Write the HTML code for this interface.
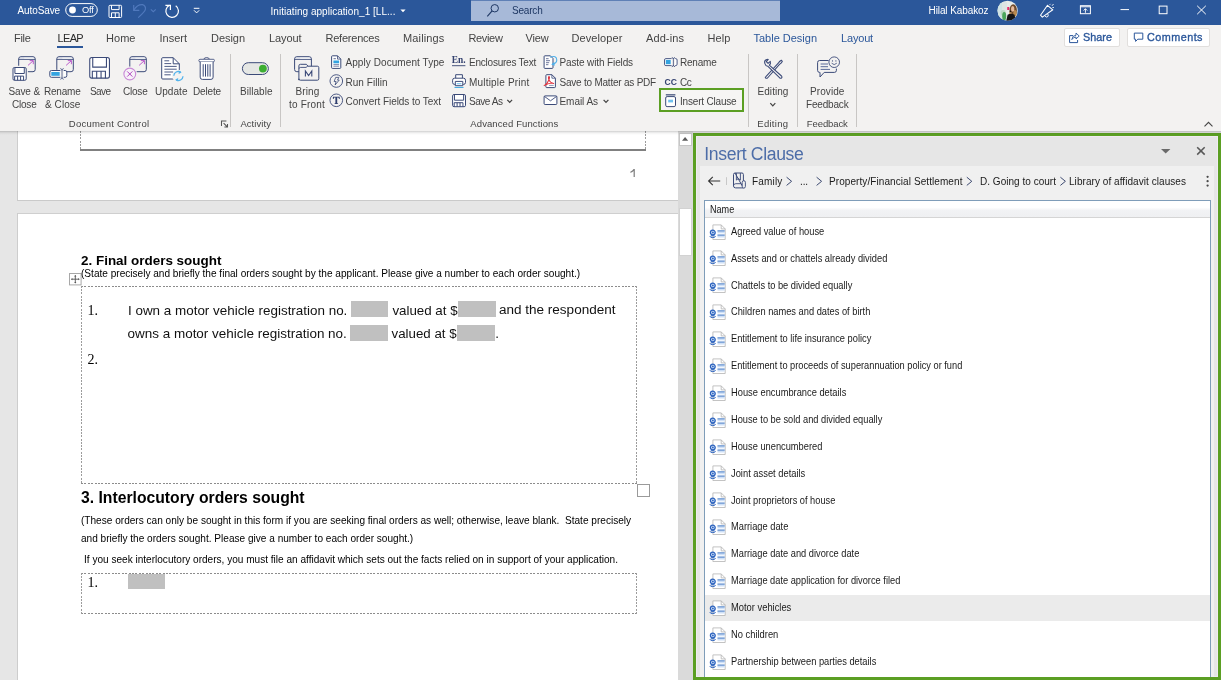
<!DOCTYPE html>
<html><head><meta charset="utf-8"><title>Word</title>
<style>

html,body{margin:0;padding:0;background:#e6e6e6;}
body{width:1221px;height:680px;overflow:hidden;font-family:"Liberation Sans",sans-serif;}
#root{position:relative;width:1221px;height:680px;overflow:hidden;background:#e6e6e6;}
.t{will-change:opacity;}
.a{position:absolute;}
.t{position:absolute;white-space:pre;color:#444;font-family:"Liberation Sans",sans-serif;}
svg{position:absolute;overflow:visible;}
.sep{position:absolute;width:1px;background:#c8c6c4;top:54px;height:73px;}
.fld{position:absolute;background:#c0c0c0;}
.row{position:absolute;left:705px;width:505px;height:27px;}

</style></head>
<body>
<div id="root">

<!-- ===== document area ===== -->
<div class="a" style="left:17.6px;top:131px;width:662px;height:69.2px;background:#fff;"></div>
<div class="a" style="left:17.6px;top:213.3px;width:662px;height:467px;background:#fff;"></div>
<div class="a" style="left:16.8px;top:131px;width:1px;height:70px;background:#cdcdcd;"></div>
<div class="a" style="left:16.8px;top:212.5px;width:663px;height:1px;background:#cfcfcf;"></div>
<div class="a" style="left:16.8px;top:212.5px;width:1px;height:468px;background:#cdcdcd;"></div>
<div class="a" style="left:16.8px;top:200px;width:663px;height:1px;background:#cacaca;"></div>
<!-- page1 remnants -->
<div class="a" style="left:80px;top:131px;width:1px;height:18.5px;background:repeating-linear-gradient(180deg,#9c9c9c 0,#9c9c9c 2px,transparent 2px,transparent 3.25px);"></div>
<div class="a" style="left:645px;top:131px;width:1px;height:18.5px;background:repeating-linear-gradient(180deg,#9c9c9c 0,#9c9c9c 2px,transparent 2px,transparent 3.25px);"></div>
<div class="a" style="left:80px;top:149.2px;width:566px;height:1.6px;background:#808080;"></div>
<svg style="left:0;top:0" width="700" height="200" viewBox="0 0 700 200"><path d="M633.6 168.9 H634.8 V176.9 H633.6 V170.9 Q632.2 172.2 630.3 172.8 V171.7 Q632.6 170.7 633.6 168.9 Z" fill="#7c7c7c"/></svg>
<!-- table 1 -->
<div class="a" style="left:80.5px;top:286px;width:556.5px;height:1px;background:repeating-linear-gradient(90deg,#8c8c8c 0,#8c8c8c 2px,transparent 2px,transparent 3.4px);"></div><div class="a" style="left:80.5px;top:483.3px;width:556.5px;height:1px;background:repeating-linear-gradient(90deg,#8c8c8c 0,#8c8c8c 2px,transparent 2px,transparent 3.4px);"></div><div class="a" style="left:80.5px;top:286px;width:1px;height:198.3px;background:repeating-linear-gradient(180deg,#9c9c9c 0,#9c9c9c 2px,transparent 2px,transparent 3.25px);"></div><div class="a" style="left:636.0px;top:286px;width:1px;height:198.3px;background:repeating-linear-gradient(180deg,#9c9c9c 0,#9c9c9c 2px,transparent 2px,transparent 3.25px);"></div>
<div class="a" style="left:637px;top:484.2px;width:12.6px;height:12.6px;border:1px solid #9a9a9a;background:#fff;box-sizing:border-box;"></div>
<svg style="left:69.2px;top:273.2px" width="13" height="13" viewBox="0 0 13 13"><rect x="0.5" y="0.5" width="11.6" height="11.4" fill="#fff" stroke="#a8a8a8" stroke-width="1"/><path d="M6.3 2.4 V10 M2.4 6.2 H10.2" stroke="#555" stroke-width="0.9"/><path d="M5.2 3.4 L6.3 2 L7.4 3.4 Z M5.2 9 L6.3 10.4 L7.4 9 Z M3.4 5.1 L2 6.2 L3.4 7.3 Z M9.2 5.1 L10.6 6.2 L9.2 7.3 Z" fill="#555"/></svg>
<div class="fld" style="left:351px;top:301.3px;width:37px;height:15.6px;"></div>
<div class="fld" style="left:458.2px;top:301.3px;width:37.5px;height:15.6px;"></div>
<div class="fld" style="left:350.4px;top:325px;width:37.6px;height:15.6px;"></div>
<div class="fld" style="left:457px;top:325px;width:38px;height:15.6px;"></div>
<!-- table 2 -->
<div class="a" style="left:80.5px;top:573.1px;width:556.5px;height:1px;background:repeating-linear-gradient(90deg,#8c8c8c 0,#8c8c8c 2px,transparent 2px,transparent 3.4px);"></div><div class="a" style="left:80.5px;top:612.7px;width:556.5px;height:1px;background:repeating-linear-gradient(90deg,#8c8c8c 0,#8c8c8c 2px,transparent 2px,transparent 3.4px);"></div><div class="a" style="left:80.5px;top:573.1px;width:1px;height:40.6px;background:repeating-linear-gradient(180deg,#9c9c9c 0,#9c9c9c 2px,transparent 2px,transparent 3.25px);"></div><div class="a" style="left:636.0px;top:573.1px;width:1px;height:40.6px;background:repeating-linear-gradient(180deg,#9c9c9c 0,#9c9c9c 2px,transparent 2px,transparent 3.25px);"></div>
<div class="fld" style="left:128px;top:574px;width:36.7px;height:15px;"></div>
<!-- scrollbar -->
<div class="a" style="left:678.4px;top:131px;width:15px;height:549px;background:#dadada;"></div>
<div class="a" style="left:679px;top:133px;width:12.5px;height:12.5px;background:#fff;border:1px solid #c6c6c6;box-sizing:border-box;"></div>
<svg style="left:682.1px;top:137.3px" width="6.2" height="3.7" viewBox="0 0 6.2 3.7"><path d="M0 3.7 L3.1 0 L6.2 3.7 Z" fill="#5a5a5a"/></svg>
<div class="a" style="left:679px;top:208px;width:12.5px;height:47.5px;background:#fff;border:1px solid #d2d2d2;box-sizing:border-box;"></div>

<!-- ===== Insert Clause pane ===== -->
<div class="a" style="left:693px;top:133px;width:528px;height:547px;background:#5b9f23;"></div>
<div class="a" style="left:696.1px;top:136px;width:522.1px;height:541.2px;background:#e6e6e6;border:0.8px solid #f0ebf2;box-sizing:border-box;"></div>
<div class="a" style="left:700px;top:165.8px;width:514.3px;height:510.8px;background:#f0f0f0;"></div>
<div class="a" style="left:704px;top:200px;width:507px;height:477.2px;background:#fff;border:1px solid #7f9db9;border-bottom:none;box-sizing:border-box;"></div>
<div class="a" style="left:705px;top:201px;width:505px;height:16px;background:linear-gradient(#ffffff 0,#ffffff 40%,#f1f2f4 60%,#eff0f2 100%);border-bottom:1px solid #d5d5d5;"></div>
<div class="a" style="left:705px;top:594.8px;width:505px;height:26px;background:#ebebeb;"></div>
<svg style="left:709.1px;top:223.5px" width="17" height="17" viewBox="0 0 17 17"><path d="M3.9 0.9 H12.2 L16.2 4.9 V15.5 H3.9 Z" fill="#fff" stroke="#b4b4b4" stroke-width="0.8"/><path d="M12.2 0.9 V4.9 H16.2" fill="none" stroke="#b4b4b4" stroke-width="0.8"/><rect x="8.5" y="6.4" width="7.2" height="2.9" fill="#cfe0f6"/><rect x="8.5" y="10.6" width="7.2" height="2.9" fill="#cfe0f6"/><path d="M8.5 6.9 H15.7 M8.5 11.1 H15.7" stroke="#4d7fc6" stroke-width="1"/><circle cx="3.8" cy="8.6" r="2.4" fill="#d4e3f8" stroke="#2c63bf" stroke-width="1.3"/><circle cx="3.9" cy="8.5" r="0.9" fill="#2c63bf"/><ellipse cx="3.7" cy="12.6" rx="2.6" ry="0.9" fill="none" stroke="#2c63bf" stroke-width="1"/></svg>
<svg style="left:709.1px;top:250.38px" width="17" height="17" viewBox="0 0 17 17"><path d="M3.9 0.9 H12.2 L16.2 4.9 V15.5 H3.9 Z" fill="#fff" stroke="#b4b4b4" stroke-width="0.8"/><path d="M12.2 0.9 V4.9 H16.2" fill="none" stroke="#b4b4b4" stroke-width="0.8"/><rect x="8.5" y="6.4" width="7.2" height="2.9" fill="#cfe0f6"/><rect x="8.5" y="10.6" width="7.2" height="2.9" fill="#cfe0f6"/><path d="M8.5 6.9 H15.7 M8.5 11.1 H15.7" stroke="#4d7fc6" stroke-width="1"/><circle cx="3.8" cy="8.6" r="2.4" fill="#d4e3f8" stroke="#2c63bf" stroke-width="1.3"/><circle cx="3.9" cy="8.5" r="0.9" fill="#2c63bf"/><ellipse cx="3.7" cy="12.6" rx="2.6" ry="0.9" fill="none" stroke="#2c63bf" stroke-width="1"/></svg>
<svg style="left:709.1px;top:277.25px" width="17" height="17" viewBox="0 0 17 17"><path d="M3.9 0.9 H12.2 L16.2 4.9 V15.5 H3.9 Z" fill="#fff" stroke="#b4b4b4" stroke-width="0.8"/><path d="M12.2 0.9 V4.9 H16.2" fill="none" stroke="#b4b4b4" stroke-width="0.8"/><rect x="8.5" y="6.4" width="7.2" height="2.9" fill="#cfe0f6"/><rect x="8.5" y="10.6" width="7.2" height="2.9" fill="#cfe0f6"/><path d="M8.5 6.9 H15.7 M8.5 11.1 H15.7" stroke="#4d7fc6" stroke-width="1"/><circle cx="3.8" cy="8.6" r="2.4" fill="#d4e3f8" stroke="#2c63bf" stroke-width="1.3"/><circle cx="3.9" cy="8.5" r="0.9" fill="#2c63bf"/><ellipse cx="3.7" cy="12.6" rx="2.6" ry="0.9" fill="none" stroke="#2c63bf" stroke-width="1"/></svg>
<svg style="left:709.1px;top:304.12px" width="17" height="17" viewBox="0 0 17 17"><path d="M3.9 0.9 H12.2 L16.2 4.9 V15.5 H3.9 Z" fill="#fff" stroke="#b4b4b4" stroke-width="0.8"/><path d="M12.2 0.9 V4.9 H16.2" fill="none" stroke="#b4b4b4" stroke-width="0.8"/><rect x="8.5" y="6.4" width="7.2" height="2.9" fill="#cfe0f6"/><rect x="8.5" y="10.6" width="7.2" height="2.9" fill="#cfe0f6"/><path d="M8.5 6.9 H15.7 M8.5 11.1 H15.7" stroke="#4d7fc6" stroke-width="1"/><circle cx="3.8" cy="8.6" r="2.4" fill="#d4e3f8" stroke="#2c63bf" stroke-width="1.3"/><circle cx="3.9" cy="8.5" r="0.9" fill="#2c63bf"/><ellipse cx="3.7" cy="12.6" rx="2.6" ry="0.9" fill="none" stroke="#2c63bf" stroke-width="1"/></svg>
<svg style="left:709.1px;top:331.0px" width="17" height="17" viewBox="0 0 17 17"><path d="M3.9 0.9 H12.2 L16.2 4.9 V15.5 H3.9 Z" fill="#fff" stroke="#b4b4b4" stroke-width="0.8"/><path d="M12.2 0.9 V4.9 H16.2" fill="none" stroke="#b4b4b4" stroke-width="0.8"/><rect x="8.5" y="6.4" width="7.2" height="2.9" fill="#cfe0f6"/><rect x="8.5" y="10.6" width="7.2" height="2.9" fill="#cfe0f6"/><path d="M8.5 6.9 H15.7 M8.5 11.1 H15.7" stroke="#4d7fc6" stroke-width="1"/><circle cx="3.8" cy="8.6" r="2.4" fill="#d4e3f8" stroke="#2c63bf" stroke-width="1.3"/><circle cx="3.9" cy="8.5" r="0.9" fill="#2c63bf"/><ellipse cx="3.7" cy="12.6" rx="2.6" ry="0.9" fill="none" stroke="#2c63bf" stroke-width="1"/></svg>
<svg style="left:709.1px;top:357.88px" width="17" height="17" viewBox="0 0 17 17"><path d="M3.9 0.9 H12.2 L16.2 4.9 V15.5 H3.9 Z" fill="#fff" stroke="#b4b4b4" stroke-width="0.8"/><path d="M12.2 0.9 V4.9 H16.2" fill="none" stroke="#b4b4b4" stroke-width="0.8"/><rect x="8.5" y="6.4" width="7.2" height="2.9" fill="#cfe0f6"/><rect x="8.5" y="10.6" width="7.2" height="2.9" fill="#cfe0f6"/><path d="M8.5 6.9 H15.7 M8.5 11.1 H15.7" stroke="#4d7fc6" stroke-width="1"/><circle cx="3.8" cy="8.6" r="2.4" fill="#d4e3f8" stroke="#2c63bf" stroke-width="1.3"/><circle cx="3.9" cy="8.5" r="0.9" fill="#2c63bf"/><ellipse cx="3.7" cy="12.6" rx="2.6" ry="0.9" fill="none" stroke="#2c63bf" stroke-width="1"/></svg>
<svg style="left:709.1px;top:384.75px" width="17" height="17" viewBox="0 0 17 17"><path d="M3.9 0.9 H12.2 L16.2 4.9 V15.5 H3.9 Z" fill="#fff" stroke="#b4b4b4" stroke-width="0.8"/><path d="M12.2 0.9 V4.9 H16.2" fill="none" stroke="#b4b4b4" stroke-width="0.8"/><rect x="8.5" y="6.4" width="7.2" height="2.9" fill="#cfe0f6"/><rect x="8.5" y="10.6" width="7.2" height="2.9" fill="#cfe0f6"/><path d="M8.5 6.9 H15.7 M8.5 11.1 H15.7" stroke="#4d7fc6" stroke-width="1"/><circle cx="3.8" cy="8.6" r="2.4" fill="#d4e3f8" stroke="#2c63bf" stroke-width="1.3"/><circle cx="3.9" cy="8.5" r="0.9" fill="#2c63bf"/><ellipse cx="3.7" cy="12.6" rx="2.6" ry="0.9" fill="none" stroke="#2c63bf" stroke-width="1"/></svg>
<svg style="left:709.1px;top:411.62px" width="17" height="17" viewBox="0 0 17 17"><path d="M3.9 0.9 H12.2 L16.2 4.9 V15.5 H3.9 Z" fill="#fff" stroke="#b4b4b4" stroke-width="0.8"/><path d="M12.2 0.9 V4.9 H16.2" fill="none" stroke="#b4b4b4" stroke-width="0.8"/><rect x="8.5" y="6.4" width="7.2" height="2.9" fill="#cfe0f6"/><rect x="8.5" y="10.6" width="7.2" height="2.9" fill="#cfe0f6"/><path d="M8.5 6.9 H15.7 M8.5 11.1 H15.7" stroke="#4d7fc6" stroke-width="1"/><circle cx="3.8" cy="8.6" r="2.4" fill="#d4e3f8" stroke="#2c63bf" stroke-width="1.3"/><circle cx="3.9" cy="8.5" r="0.9" fill="#2c63bf"/><ellipse cx="3.7" cy="12.6" rx="2.6" ry="0.9" fill="none" stroke="#2c63bf" stroke-width="1"/></svg>
<svg style="left:709.1px;top:438.5px" width="17" height="17" viewBox="0 0 17 17"><path d="M3.9 0.9 H12.2 L16.2 4.9 V15.5 H3.9 Z" fill="#fff" stroke="#b4b4b4" stroke-width="0.8"/><path d="M12.2 0.9 V4.9 H16.2" fill="none" stroke="#b4b4b4" stroke-width="0.8"/><rect x="8.5" y="6.4" width="7.2" height="2.9" fill="#cfe0f6"/><rect x="8.5" y="10.6" width="7.2" height="2.9" fill="#cfe0f6"/><path d="M8.5 6.9 H15.7 M8.5 11.1 H15.7" stroke="#4d7fc6" stroke-width="1"/><circle cx="3.8" cy="8.6" r="2.4" fill="#d4e3f8" stroke="#2c63bf" stroke-width="1.3"/><circle cx="3.9" cy="8.5" r="0.9" fill="#2c63bf"/><ellipse cx="3.7" cy="12.6" rx="2.6" ry="0.9" fill="none" stroke="#2c63bf" stroke-width="1"/></svg>
<svg style="left:709.1px;top:465.38px" width="17" height="17" viewBox="0 0 17 17"><path d="M3.9 0.9 H12.2 L16.2 4.9 V15.5 H3.9 Z" fill="#fff" stroke="#b4b4b4" stroke-width="0.8"/><path d="M12.2 0.9 V4.9 H16.2" fill="none" stroke="#b4b4b4" stroke-width="0.8"/><rect x="8.5" y="6.4" width="7.2" height="2.9" fill="#cfe0f6"/><rect x="8.5" y="10.6" width="7.2" height="2.9" fill="#cfe0f6"/><path d="M8.5 6.9 H15.7 M8.5 11.1 H15.7" stroke="#4d7fc6" stroke-width="1"/><circle cx="3.8" cy="8.6" r="2.4" fill="#d4e3f8" stroke="#2c63bf" stroke-width="1.3"/><circle cx="3.9" cy="8.5" r="0.9" fill="#2c63bf"/><ellipse cx="3.7" cy="12.6" rx="2.6" ry="0.9" fill="none" stroke="#2c63bf" stroke-width="1"/></svg>
<svg style="left:709.1px;top:492.25px" width="17" height="17" viewBox="0 0 17 17"><path d="M3.9 0.9 H12.2 L16.2 4.9 V15.5 H3.9 Z" fill="#fff" stroke="#b4b4b4" stroke-width="0.8"/><path d="M12.2 0.9 V4.9 H16.2" fill="none" stroke="#b4b4b4" stroke-width="0.8"/><rect x="8.5" y="6.4" width="7.2" height="2.9" fill="#cfe0f6"/><rect x="8.5" y="10.6" width="7.2" height="2.9" fill="#cfe0f6"/><path d="M8.5 6.9 H15.7 M8.5 11.1 H15.7" stroke="#4d7fc6" stroke-width="1"/><circle cx="3.8" cy="8.6" r="2.4" fill="#d4e3f8" stroke="#2c63bf" stroke-width="1.3"/><circle cx="3.9" cy="8.5" r="0.9" fill="#2c63bf"/><ellipse cx="3.7" cy="12.6" rx="2.6" ry="0.9" fill="none" stroke="#2c63bf" stroke-width="1"/></svg>
<svg style="left:709.1px;top:519.12px" width="17" height="17" viewBox="0 0 17 17"><path d="M3.9 0.9 H12.2 L16.2 4.9 V15.5 H3.9 Z" fill="#fff" stroke="#b4b4b4" stroke-width="0.8"/><path d="M12.2 0.9 V4.9 H16.2" fill="none" stroke="#b4b4b4" stroke-width="0.8"/><rect x="8.5" y="6.4" width="7.2" height="2.9" fill="#cfe0f6"/><rect x="8.5" y="10.6" width="7.2" height="2.9" fill="#cfe0f6"/><path d="M8.5 6.9 H15.7 M8.5 11.1 H15.7" stroke="#4d7fc6" stroke-width="1"/><circle cx="3.8" cy="8.6" r="2.4" fill="#d4e3f8" stroke="#2c63bf" stroke-width="1.3"/><circle cx="3.9" cy="8.5" r="0.9" fill="#2c63bf"/><ellipse cx="3.7" cy="12.6" rx="2.6" ry="0.9" fill="none" stroke="#2c63bf" stroke-width="1"/></svg>
<svg style="left:709.1px;top:546.0px" width="17" height="17" viewBox="0 0 17 17"><path d="M3.9 0.9 H12.2 L16.2 4.9 V15.5 H3.9 Z" fill="#fff" stroke="#b4b4b4" stroke-width="0.8"/><path d="M12.2 0.9 V4.9 H16.2" fill="none" stroke="#b4b4b4" stroke-width="0.8"/><rect x="8.5" y="6.4" width="7.2" height="2.9" fill="#cfe0f6"/><rect x="8.5" y="10.6" width="7.2" height="2.9" fill="#cfe0f6"/><path d="M8.5 6.9 H15.7 M8.5 11.1 H15.7" stroke="#4d7fc6" stroke-width="1"/><circle cx="3.8" cy="8.6" r="2.4" fill="#d4e3f8" stroke="#2c63bf" stroke-width="1.3"/><circle cx="3.9" cy="8.5" r="0.9" fill="#2c63bf"/><ellipse cx="3.7" cy="12.6" rx="2.6" ry="0.9" fill="none" stroke="#2c63bf" stroke-width="1"/></svg>
<svg style="left:709.1px;top:572.88px" width="17" height="17" viewBox="0 0 17 17"><path d="M3.9 0.9 H12.2 L16.2 4.9 V15.5 H3.9 Z" fill="#fff" stroke="#b4b4b4" stroke-width="0.8"/><path d="M12.2 0.9 V4.9 H16.2" fill="none" stroke="#b4b4b4" stroke-width="0.8"/><rect x="8.5" y="6.4" width="7.2" height="2.9" fill="#cfe0f6"/><rect x="8.5" y="10.6" width="7.2" height="2.9" fill="#cfe0f6"/><path d="M8.5 6.9 H15.7 M8.5 11.1 H15.7" stroke="#4d7fc6" stroke-width="1"/><circle cx="3.8" cy="8.6" r="2.4" fill="#d4e3f8" stroke="#2c63bf" stroke-width="1.3"/><circle cx="3.9" cy="8.5" r="0.9" fill="#2c63bf"/><ellipse cx="3.7" cy="12.6" rx="2.6" ry="0.9" fill="none" stroke="#2c63bf" stroke-width="1"/></svg>
<svg style="left:709.1px;top:599.75px" width="17" height="17" viewBox="0 0 17 17"><path d="M3.9 0.9 H12.2 L16.2 4.9 V15.5 H3.9 Z" fill="#fff" stroke="#b4b4b4" stroke-width="0.8"/><path d="M12.2 0.9 V4.9 H16.2" fill="none" stroke="#b4b4b4" stroke-width="0.8"/><rect x="8.5" y="6.4" width="7.2" height="2.9" fill="#cfe0f6"/><rect x="8.5" y="10.6" width="7.2" height="2.9" fill="#cfe0f6"/><path d="M8.5 6.9 H15.7 M8.5 11.1 H15.7" stroke="#4d7fc6" stroke-width="1"/><circle cx="3.8" cy="8.6" r="2.4" fill="#d4e3f8" stroke="#2c63bf" stroke-width="1.3"/><circle cx="3.9" cy="8.5" r="0.9" fill="#2c63bf"/><ellipse cx="3.7" cy="12.6" rx="2.6" ry="0.9" fill="none" stroke="#2c63bf" stroke-width="1"/></svg>
<svg style="left:709.1px;top:626.62px" width="17" height="17" viewBox="0 0 17 17"><path d="M3.9 0.9 H12.2 L16.2 4.9 V15.5 H3.9 Z" fill="#fff" stroke="#b4b4b4" stroke-width="0.8"/><path d="M12.2 0.9 V4.9 H16.2" fill="none" stroke="#b4b4b4" stroke-width="0.8"/><rect x="8.5" y="6.4" width="7.2" height="2.9" fill="#cfe0f6"/><rect x="8.5" y="10.6" width="7.2" height="2.9" fill="#cfe0f6"/><path d="M8.5 6.9 H15.7 M8.5 11.1 H15.7" stroke="#4d7fc6" stroke-width="1"/><circle cx="3.8" cy="8.6" r="2.4" fill="#d4e3f8" stroke="#2c63bf" stroke-width="1.3"/><circle cx="3.9" cy="8.5" r="0.9" fill="#2c63bf"/><ellipse cx="3.7" cy="12.6" rx="2.6" ry="0.9" fill="none" stroke="#2c63bf" stroke-width="1"/></svg>
<svg style="left:709.1px;top:653.5px" width="17" height="17" viewBox="0 0 17 17"><path d="M3.9 0.9 H12.2 L16.2 4.9 V15.5 H3.9 Z" fill="#fff" stroke="#b4b4b4" stroke-width="0.8"/><path d="M12.2 0.9 V4.9 H16.2" fill="none" stroke="#b4b4b4" stroke-width="0.8"/><rect x="8.5" y="6.4" width="7.2" height="2.9" fill="#cfe0f6"/><rect x="8.5" y="10.6" width="7.2" height="2.9" fill="#cfe0f6"/><path d="M8.5 6.9 H15.7 M8.5 11.1 H15.7" stroke="#4d7fc6" stroke-width="1"/><circle cx="3.8" cy="8.6" r="2.4" fill="#d4e3f8" stroke="#2c63bf" stroke-width="1.3"/><circle cx="3.9" cy="8.5" r="0.9" fill="#2c63bf"/><ellipse cx="3.7" cy="12.6" rx="2.6" ry="0.9" fill="none" stroke="#2c63bf" stroke-width="1"/></svg>
<svg style="left:0;top:0" width="1221" height="200" viewBox="0 0 1221 200"><path d="M1161 149 H1170.4 L1165.7 153.4 Z" fill="#6a6a6a"/>
<path d="M1197.2 147.3 L1204.7 154.6 M1204.7 147.3 L1197.2 154.6" stroke="#585858" stroke-width="1.55"/>
<path d="M708.6 181 H720.2 M712.8 176.8 L708.6 181 L712.8 185.2" fill="none" stroke="#333" stroke-width="1.1"/>
<path d="M726.5 177.2 V185" stroke="#c8c8c8" stroke-width="1"/>
<g transform="translate(733,172.5)"><path d="M2 0.5 H9 Q10.4 0.5 10.4 2 V8.4 M10.4 15.4 H2.6 Q0.5 15.4 0.5 13.4 V2 Q0.5 0.5 2 0.5 Z" fill="none" stroke="#3b4a78" stroke-width="1"/><path d="M0.6 13 Q0.8 11.2 2.8 11.2 H8.2" fill="none" stroke="#3b4a78" stroke-width="0.9"/><path d="M3.4 0.6 V7.6 L5.4 6 L7.4 7.6 V0.6" fill="none" stroke="#3b4a78" stroke-width="0.9"/><rect x="9.2" y="8.2" width="3.2" height="7.4" rx="1.6" fill="#f0f0f0" stroke="#3b4a78" stroke-width="0.9"/></g>
<path d="M786.6 177.2 L791.6 181.29999999999998 L786.6 185.39999999999998" fill="none" stroke="#3d4a70" stroke-width="1.0"/>
<path d="M816.6 177.2 L821.6 181.29999999999998 L816.6 185.39999999999998" fill="none" stroke="#3d4a70" stroke-width="1.0"/>
<path d="M966.8 177.2 L971.8 181.29999999999998 L966.8 185.39999999999998" fill="none" stroke="#3d4a70" stroke-width="1.0"/>
<path d="M1060.4 177.2 L1065.4 181.29999999999998 L1060.4 185.39999999999998" fill="none" stroke="#3d4a70" stroke-width="1.0"/>
<circle cx="1207.6" cy="176.8" r="1.15" fill="#4a4a4a"/>
<circle cx="1207.6" cy="181.2" r="1.15" fill="#4a4a4a"/>
<circle cx="1207.6" cy="185.6" r="1.15" fill="#4a4a4a"/></svg>

<!-- ===== title bar ===== -->
<div class="a" style="left:0;top:0;width:1221px;height:25px;background:#2b579a;"></div>
<div class="a" style="left:470.6px;top:0;width:309.2px;height:20.5px;background:#a7b9d8;border-top:1px solid #5f80b6;box-sizing:border-box;"></div>
<svg style="left:0;top:0" width="1221" height="25" viewBox="0 0 1221 25"><rect x="65.7" y="3.6" width="31.6" height="12.8" rx="6.4" fill="none" stroke="#fff" stroke-width="1"/>
<circle cx="72.5" cy="10" r="3.4" fill="#fff"/>
<g transform="translate(108.5,4.8)"><rect x="0.5" y="0.5" width="12.6" height="12.2" rx="1" fill="none" stroke="#fff"/><path d="M3 0.5 V4.8 H10.6 V0.5 M3 12.7 V8 H10.6 V12.7 M6.8 8 V12.7" fill="none" stroke="#fff"/></g>
<path d="M133.7 5 V10.3 H139.3" fill="none" stroke="#5079bd" stroke-width="1.15"/>
<path d="M133.9 10.1 Q137 4.4 142.4 4.6 Q146 5.6 145.4 9.4 Q145 11.6 138.2 17.6" fill="none" stroke="#5079bd" stroke-width="1.15"/>
<path d="M150.8 9.3 L153.3 11.700000000000001 L155.8 9.3" fill="none" stroke="#5079bd" stroke-width="1.1"/>
<path d="M175.7 5.85 A6.3 6.3 0 1 1 169.6 5.3" fill="none" stroke="#fff" stroke-width="1.2"/>
<path d="M165.4 5.3 H170.4 V9.9" fill="none" stroke="#fff" stroke-width="1.2"/>
<path d="M193.8 8.3 H199.4" stroke="#fff" stroke-width="1"/>
<path d="M194 10.3 L196.6 12.9 L199.2 10.3" fill="none" stroke="#fff" stroke-width="1"/>
<path d="M400.4 9.4 H405.6 L403 12.2 Z" fill="#fff"/>
<circle cx="494.75" cy="8.25" r="3.7" fill="none" stroke="#1f3864" stroke-width="1"/>
<path d="M492.1 10.9 L487.3 16.4" stroke="#1f3864" stroke-width="1.1"/>
<defs><clipPath id="av"><circle cx="1007.6" cy="10.75" r="10.1"/></clipPath></defs>
<g clip-path="url(#av)"><rect x="997" y="0" width="22" height="22" fill="#e8ecea"/><rect x="997" y="0" width="5" height="22" fill="#cfe3e4"/><rect x="1002" y="2" width="5" height="9" fill="#dfe6e4"/><ellipse cx="1003.2" cy="13" rx="2.6" ry="3" fill="#b9d9c2"/><ellipse cx="1004.2" cy="16.2" rx="2" ry="4.2" fill="#4aa65b"/><rect x="1007.2" y="6.9" width="2.1" height="3.1" rx="0.5" fill="#e72f6d"/><ellipse cx="1013.2" cy="10.4" rx="3.7" ry="6.1" fill="#6e4a2c"/><ellipse cx="1015" cy="13.2" rx="1.7" ry="3.2" fill="#b98a4e"/><ellipse cx="1010.4" cy="13.6" rx="1.2" ry="2.6" fill="#c3975c"/><ellipse cx="1012.7" cy="8.9" rx="1.7" ry="2.8" fill="#e6b99b"/><path d="M1006 22 L1007.6 14.8 Q1011 12.6 1014.6 14.8 L1016 22 Z" fill="#141414"/><circle cx="1010.4" cy="11.4" r="0.8" fill="#1a1410"/></g>
<path d="M1040.5 15.2 L1047.5 5.3 L1052.8 9.8 L1042.3 17.1 Z" fill="none" stroke="#fff" stroke-width="1.05" stroke-linejoin="round"/>
<path d="M1044.8 15.8 Q1046 18 1047.9 16.5 Q1048.7 15.2 1047.7 13.9" fill="none" stroke="#fff" stroke-width="0.95"/>
<path d="M1049.7 4.8 L1050.5 3.9 M1052 5.8 L1053.5 4 M1052.4 7.5 H1053.9" stroke="#fff" stroke-width="0.9"/>
<g transform="translate(1079.9,5.2)"><rect x="0.5" y="0.5" width="10" height="8" fill="none" stroke="#fff"/><path d="M0.5 1.5 H10.5" stroke="#fff" stroke-width="1.3" opacity="0.75"/><path d="M5.5 7.6 V3.6 M3.7 5.3 L5.5 3.5 L7.3 5.3" fill="none" stroke="#fff" stroke-width="0.95"/></g>
<path d="M1120.5 9.6 H1129" stroke="#fff" stroke-width="1"/>
<rect x="1159.2" y="6.1" width="7.8" height="7.6" fill="none" stroke="#fff" stroke-width="1"/>
<path d="M1197.2 5.8 L1205.8 14.2 M1205.8 5.8 L1197.2 14.2" stroke="#fff" stroke-width="1"/></svg>

<!-- ===== ribbon ===== -->
<div class="a" style="left:0;top:25px;width:1221px;height:105.6px;background:#f3f2f1;"></div>
<div class="a" style="left:0;top:130.6px;width:1221px;height:4.4px;background:linear-gradient(rgba(0,0,0,0.20) 0,rgba(0,0,0,0.10) 25%,rgba(0,0,0,0.04) 60%,rgba(0,0,0,0) 100%);"></div>
<div class="a" style="left:57px;top:45.5px;width:26px;height:2px;background:#2b579a;"></div>
<div class="sep" style="left:230.2px"></div>
<div class="sep" style="left:280px"></div>
<div class="sep" style="left:748.1px"></div>
<div class="sep" style="left:796.7px"></div>
<div class="sep" style="left:856.1px"></div>
<!-- share / comments -->
<div class="a" style="left:1063.7px;top:27.8px;width:56px;height:19.2px;background:#fff;border:1px solid #e1dfdd;box-sizing:border-box;border-radius:2px;"></div>
<div class="a" style="left:1127.4px;top:27.8px;width:83px;height:19.2px;background:#fff;border:1px solid #e1dfdd;box-sizing:border-box;border-radius:2px;"></div>
<!-- insert clause highlight -->
<div class="a" style="left:659px;top:88px;width:85px;height:24px;border:2.6px solid #5b9f23;box-sizing:border-box;background:#f6f5f4;"></div>
<svg style="left:0;top:0" width="1221" height="135" viewBox="0 0 1221 135"><g transform="translate(18.2,56.2)"><path d="M0.5 3.2 V2.7 Q0.5 0.5 2.7 0.5 H14.8 Q17.0 0.5 17.0 2.7 V3.2 Z" fill="#fff"/><rect x="0.5" y="0.5" width="16.5" height="15" rx="2.2" fill="none" stroke="#3b4a78" stroke-width="1"/><path d="M0.5 3.2 H17.0" stroke="#3b4a78" stroke-width="0.9"/><path d="M2 1.8 H6" stroke="#b9c0d6" stroke-width="0.7"/><path d="M9.8 9.2 L15.0 4.5" stroke="#b655c7" stroke-width="0.95" fill="none"/><path d="M11.5 4.3999999999999995 H15.100000000000001 V8.0" stroke="#b655c7" stroke-width="0.95" fill="none"/></g>
<g transform="translate(12.5,67)"><rect x="-1.2" y="-1.2" width="16.6" height="16.2" rx="2" fill="#f3f2f1"/><rect x="0.5" y="0.5" width="13.2" height="12.8" rx="1.42" fill="#fff" stroke="#3b4a78" stroke-width="1.0"/><path d="M2.41 0.5 V6.49 H11.79 V0.5" fill="none" stroke="#3b4a78" stroke-width="1.0"/><path d="M2.13 13.3 V9.11 H11.08 V13.3" fill="none" stroke="#3b4a78" stroke-width="1.0"/><path d="M5.11 9.11 V13.3 M8.09 9.11 V13.3" stroke="#3b4a78" stroke-width="1.0"/></g>
<g transform="translate(56.3,56.2)"><path d="M0.5 3.2 V2.7 Q0.5 0.5 2.7 0.5 H14.8 Q17.0 0.5 17.0 2.7 V3.2 Z" fill="#fff"/><rect x="0.5" y="0.5" width="16.5" height="15" rx="2.2" fill="none" stroke="#3b4a78" stroke-width="1"/><path d="M0.5 3.2 H17.0" stroke="#3b4a78" stroke-width="0.9"/><path d="M2 1.8 H6" stroke="#b9c0d6" stroke-width="0.7"/><path d="M9.8 9.2 L15.0 4.5" stroke="#b655c7" stroke-width="0.95" fill="none"/><path d="M11.5 4.3999999999999995 H15.100000000000001 V8.0" stroke="#b655c7" stroke-width="0.95" fill="none"/></g>
<g transform="translate(49.3,70)"><rect x="0.5" y="0.5" width="17" height="6.8" rx="1.6" fill="#fff" stroke="#3b4a78"/><rect x="2" y="2" width="8.4" height="3.8" fill="#33a3e0"/><rect x="11" y="-0.5" width="3.4" height="9" fill="#f3f2f1"/><path d="M11 -1.5 Q12.7 -1.2 12.7 0.5 V7.3 Q12.7 9 11 9.3 M14.4 -1.5 Q12.7 -1.2 12.7 0.5 M12.7 7.3 Q12.7 9 14.4 9.3" fill="none" stroke="#3b4a78" stroke-width="0.8"/></g>
<g transform="translate(89.2,56.9)"><rect x="0.55" y="0.55" width="19.7" height="20.7" rx="2.08" fill="#fff" stroke="#3b4a78" stroke-width="1.1"/><path d="M3.54 0.55 V10.25 H17.26 V0.55" fill="none" stroke="#3b4a78" stroke-width="1.1"/><path d="M3.12 21.25 V14.39 H16.22 V21.25" fill="none" stroke="#3b4a78" stroke-width="1.1"/><path d="M7.49 14.39 V21.25 M11.86 14.39 V21.25" stroke="#3b4a78" stroke-width="1.1"/></g>
<g transform="translate(129.3,56.2)"><path d="M0.5 3.2 V2.7 Q0.5 0.5 2.7 0.5 H14.8 Q17.0 0.5 17.0 2.7 V3.2 Z" fill="#fff"/><rect x="0.5" y="0.5" width="16.5" height="15" rx="2.2" fill="none" stroke="#3b4a78" stroke-width="1"/><path d="M0.5 3.2 H17.0" stroke="#3b4a78" stroke-width="0.9"/><path d="M2 1.8 H6" stroke="#b9c0d6" stroke-width="0.7"/><path d="M9.8 9.2 L15.0 4.5" stroke="#b655c7" stroke-width="0.95" fill="none"/><path d="M11.5 4.3999999999999995 H15.100000000000001 V8.0" stroke="#b655c7" stroke-width="0.95" fill="none"/></g>
<g transform="translate(129.8,74)"><circle r="7.4" fill="#f3f2f1"/><circle r="5.9" fill="#f7f2f8" stroke="#c88ad6" stroke-width="1.1"/><path d="M-2.6 -2.6 L2.6 2.6 M2.6 -2.6 L-2.6 2.6" stroke="#b146c2" stroke-width="1"/></g>
<g transform="translate(161.2,57.2)"><path d="M1.5 0.5 H12 L18.1 6.6 V21.8 H1.5 Q0.5 21.8 0.5 20.8 V1.5 Q0.5 0.5 1.5 0.5 Z" fill="#fff" stroke="#3b4a78"/><path d="M12 0.5 V6.6 H18.1" fill="none" stroke="#3b4a78"/><path d="M3.2 3.6 H8 M3.2 6.4 H10 M3.2 9.2 H15.5 M3.2 12 H15.5 M3.2 14.8 H12 M3.2 17.6 H9.5" stroke="#3b4a78" stroke-width="0.9"/><circle cx="17.2" cy="18.8" r="6.3" fill="#f3f2f1"/><path d="M12.6 18.6 A4.6 4.6 0 0 1 19.6 14.9 M21.8 19 A4.6 4.6 0 0 1 14.8 22.7" fill="none" stroke="#55b4ec" stroke-width="1.3"/><path d="M17.6 13.2 L20.4 15.2 L17.4 16.8 Z M16.8 24.4 L14 22.4 L17 20.8 Z" fill="#55b4ec"/></g>
<g transform="translate(198.4,57.2)"><path d="M5.4 2.1 Q5.6 0.4 8.2 0.4 Q10.8 0.4 11 2.1" fill="none" stroke="#3b4a78" stroke-width="0.9"/><rect x="0.5" y="2.1" width="15.5" height="2.5" rx="1.1" fill="#fff" stroke="#3b4a78" stroke-width="0.85"/><path d="M1.8 4.6 V20 Q1.8 22.2 4 22.2 H12.5 Q14.7 22.2 14.7 20 V4.6" fill="#fff" stroke="#3b4a78"/><path d="M4.8 7 V19.4 M7.1 7 V19.4 M9.4 7 V19.4 M11.7 7 V19.4" stroke="#3b4a78" stroke-width="1"/></g>
<g transform="translate(241.9,62.2)"><rect x="0.5" y="0.5" width="26" height="11.8" rx="5.9" fill="#e5e7e4" stroke="#3b4a78"/><circle cx="21" cy="6.4" r="3.9" fill="#3cae32"/></g>
<g transform="translate(294.1,56.2)"><path d="M0.5 3.2 V2.7 Q0.5 0.5 2.7 0.5 H15.100000000000001 Q17.3 0.5 17.3 2.7 V3.2 Z" fill="#fff"/><rect x="0.5" y="0.5" width="16.8" height="15" rx="2.2" fill="none" stroke="#3b4a78" stroke-width="1"/><path d="M0.5 3.2 H17.3" stroke="#3b4a78" stroke-width="0.9"/><path d="M2 1.8 H6" stroke="#b9c0d6" stroke-width="0.7"/></g>
<g transform="translate(298.4,63.8)"><path d="M0.5 16.3 V2 Q0.5 0.5 2 0.5 H8 L9.6 2.4 H19 Q20.4 2.4 20.4 3.8 V15 Q20.4 16.4 19 16.4 H2 Q0.5 16.4 0.5 15 Z" fill="#f3f2f1" stroke="#3b4a78"/><path d="M0.8 4.8 Q0.8 3.6 2.2 3.6 H7.6 L9.4 2.4" fill="none" stroke="#3b4a78" stroke-width="0.9"/><path d="M7 12.8 V7.2 L10.2 11.8 L13.4 7.2 V12.8" fill="none" stroke="#3b4a78" stroke-width="1.1" stroke-linejoin="miter"/></g>
<g transform="translate(331.1,55.3)"><path d="M1.3 0.5 H6.4 L9.7 3.8 V12.2 Q9.7 13.1 8.8 13.1 H1.3 Q0.5 13.1 0.5 12.2 V1.3 Q0.5 0.5 1.3 0.5 Z" fill="#fff" stroke="#3b4a78"/><path d="M6.4 0.5 V3.8 H9.7" fill="none" stroke="#3b4a78" stroke-width="0.8"/><path d="M2.4 3.4 H4.8" stroke="#3b4a78" stroke-width="0.8"/><rect x="2.3" y="5.2" width="5.7" height="2.8" fill="#33a3e0"/><path d="M2.3 9.3 H8 M2.3 10.9 H8" stroke="#6f7aa0" stroke-width="0.9"/></g>
<g transform="translate(336.3,81)"><circle r="6.3" fill="none" stroke="#3b4a78" stroke-width="0.9"/><path d="M-0.6 -3.6 H2.6 L1.2 -0.9 H2.9 L-1.2 4 L-0.2 0.5 H-2.2 Z" fill="none" stroke="#3b4a78" stroke-width="0.8" stroke-linejoin="round"/></g>
<g transform="translate(336.3,100.3)"><circle r="6.3" fill="none" stroke="#3b4a78" stroke-width="0.9"/><path d="M-3.4 -3.6 H3.4 V-1.4 H2.7 Q2.5 -2.7 1.5 -2.7 H0.9 V2.6 Q0.9 3 1.8 3.1 V3.7 H-1.8 V3.1 Q-0.9 3 -0.9 2.6 V-2.7 H-1.5 Q-2.5 -2.7 -2.7 -1.4 H-3.4 Z" fill="#2f3e6e"/></g>
<path d="M452 65.7 H465.4" stroke="#33416f" stroke-width="0.9"/>
<g transform="translate(452.1,74.2)"><path d="M3.6 4 V0.5 H10.3 V4" fill="#fff" stroke="#3b4a78"/><rect x="0.5" y="4" width="12.9" height="6.2" rx="2" fill="#fff" stroke="#3b4a78"/><path d="M3.2 7.2 H10.7 V11.5 H3.2 Z" fill="#fff" stroke="#3b4a78"/><path d="M4.6 9.5 H9.3" stroke="#7fc4ee" stroke-width="1.2"/><path d="M2.4 13.2 H11.4" stroke="#33a3e0" stroke-width="1"/></g>
<g transform="translate(452.1,94)"><rect x="0.5" y="0.5" width="12.9" height="12.2" rx="1.39" fill="#fff" stroke="#3b4a78" stroke-width="1.0"/><path d="M2.36 0.5 V6.20 H11.54 V0.5" fill="none" stroke="#3b4a78" stroke-width="1.0"/><path d="M2.08 12.7 V8.71 H10.84 V12.7" fill="none" stroke="#3b4a78" stroke-width="1.0"/><path d="M5.00 8.71 V12.7 M7.92 8.71 V12.7" stroke="#3b4a78" stroke-width="1.0"/></g>
<path d="M507.3 99.8 L509.7 102.39999999999999 L512.1 99.8" fill="none" stroke="#444" stroke-width="1.25"/>
<g transform="translate(543.6,55.3)"><path d="M1.3 0.5 H6.8 L9.4 3.2 V12.2 Q9.4 13.1 8.5 13.1 H1.3 Q0.5 13.1 0.5 12.2 V1.3 Q0.5 0.5 1.3 0.5 Z" fill="#fff" stroke="#3b4a78"/><path d="M2.4 3.4 H5 M2.4 5.4 H6.4 M2.4 7.4 H5.6 M2.4 9.4 H4.8" stroke="#5b668f" stroke-width="0.9"/><path d="M6.4 2 Q13 -0.6 13.2 4.6 Q13.2 7.6 9 8.8" fill="none" stroke="#4fb0ea" stroke-width="1.1"/><path d="M10.6 6.8 L7.6 9.2 L11.2 10.4 Z" fill="#4fb0ea"/></g>
<g transform="translate(544.1,74.2)"><path d="M2.6 0.5 H7.8 L11.3 4 V12.7 Q11.3 13.4 10.5 13.4 H2.6 Q1.8 13.4 1.8 12.7 V1.3 Q1.8 0.5 2.6 0.5 Z" fill="#fff" stroke="#3b4a78"/><path d="M7.8 0.5 V4 H11.3" fill="none" stroke="#3b4a78" stroke-width="0.8"/><path d="M5 11.2 H9.6" stroke="#6f7aa0" stroke-width="0.8"/><path d="M0 11.4 Q3.4 9.6 4.9 5.6 Q5.9 2.6 4.9 2.4 Q3.9 2.6 4.7 5.4 Q5.9 8.6 9.6 9.2 Q7 8 0 11.4 Z" fill="none" stroke="#e0353f" stroke-width="1.05" stroke-linejoin="round"/></g>
<g transform="translate(543.6,95.4)"><rect x="0.5" y="0.5" width="12.8" height="8.6" rx="1" fill="#fff" stroke="#3b4a78"/><path d="M0.8 1 L6.9 5.4 L13 1" fill="none" stroke="#3b4a78" stroke-width="0.9"/></g>
<path d="M603.6 99.8 L606.0 102.39999999999999 L608.4 99.8" fill="none" stroke="#444" stroke-width="1.25"/>
<g transform="translate(664,57.2)"><rect x="0.5" y="1.4" width="12.6" height="7" rx="1.4" fill="#fff" stroke="#3b4a78" stroke-width="0.9"/><rect x="1.8" y="2.7" width="4.9" height="4.3" fill="#33a3e0"/><rect x="7.6" y="0" width="3.4" height="10" fill="#f3f2f1"/><path d="M7.8 0.3 Q9.4 0.5 9.4 2 V7.8 Q9.4 9.3 7.8 9.5 M11 0.3 Q9.4 0.5 9.4 2 M9.4 7.8 Q9.4 9.3 11 9.5" fill="none" stroke="#3b4a78" stroke-width="0.8"/></g>
<g transform="translate(665.2,94)"><path d="M0.6 0.8 H10.2" stroke="#5e6a8f" stroke-width="1.5"/><rect x="0.5" y="2.6" width="9.8" height="10" rx="1.4" fill="#fff" stroke="#3b4a78"/><rect x="3" y="5.7" width="4.8" height="2.7" fill="#6fc0ef"/></g>
<g transform="translate(763.7,59)"><path d="M2.2 17.6 L14.6 4.2 Q15.6 2.2 17.6 1.2 L18.6 2.4 Q17.6 4.2 15.8 5.4 L3.8 19 Q2.6 19.6 1.8 18.8 Q1.2 18.2 2.2 17.6 Z" fill="#f3f2f1" stroke="#3b4a78" stroke-width="1.05" stroke-linejoin="round"/><path d="M1.2 4.6 Q0.2 2 2.4 0.8 Q3.6 0.2 4.6 0.4 L2.6 2.6 L4.4 4.4 L6.6 2.4 Q7.4 4.6 5.6 6.2 L17.8 17 Q18.8 18.2 17.8 19 Q16.8 19.8 15.8 18.6 L4 7.2 Q2 7.2 1.2 4.6 Z" fill="#f3f2f1" stroke="#3b4a78" stroke-width="1.05" stroke-linejoin="round"/></g>
<path d="M770.3 103.1 L772.8 105.8 L775.3 103.1" fill="none" stroke="#444" stroke-width="1.25"/>
<g transform="translate(817,59)"><path d="M11.6 1.5 H2.6 Q0.6 1.5 0.6 3.5 V11.4 Q0.6 13.4 2.6 13.4 H3 V18 L7.2 13.4 H17.4 Q19.4 13.4 19.4 11.4 V9.6" fill="none" stroke="#3b4a78" stroke-width="1"/><path d="M3.6 5 H11 M3.6 7.7 H11 M3.6 10.4 H13" stroke="#5b6b99" stroke-width="1"/><circle cx="17.2" cy="3.2" r="5.3" fill="#f3f2f1" stroke="#3b4a78" stroke-width="0.9"/><path d="M14.6 4.2 Q17.2 7 19.8 4.2" fill="none" stroke="#3b4a78" stroke-width="0.8"/><circle cx="15.5" cy="1.9" r="0.6" fill="#3b4a78"/><circle cx="18.9" cy="1.9" r="0.6" fill="#3b4a78"/></g>
<g transform="translate(221,120.5)"><path d="M0.5 5.4 V0.5 H5.4" fill="none" stroke="#555" stroke-width="1.05"/><path d="M2.6 2.6 L6.3 6.3 M3.4 6.5 H6.5 V3.4" fill="none" stroke="#555" stroke-width="1.05"/></g>
<path d="M1204.5 126.3 L1208.5 122.3 L1212.5 126.3" fill="none" stroke="#444" stroke-width="1.1"/>
<g transform="translate(1069,32)"><path d="M4 3.6 H0.6 V10.6 H8.6 V8" fill="none" stroke="#2b579a" stroke-width="1"/><path d="M2.8 7.6 Q3.2 3.4 7 3.2 V1 L10.2 4 L7 7 V5 Q4.4 5 2.8 7.6 Z" fill="none" stroke="#2b579a" stroke-width="0.9" stroke-linejoin="round"/></g>
<g transform="translate(1133.8,32.6)"><path d="M0.5 0.5 H9 V6.6 H4 L1.8 8.8 V6.6 H0.5 Z" fill="none" stroke="#2b579a" stroke-width="1" stroke-linejoin="round"/></g></svg>

<span class="t" style='left:17.5px;top:3.5px;font-size:10px;line-height:13px;letter-spacing:-0.109px;color:#ffffff;'>AutoSave</span>
<span class="t" style='left:82.0px;top:4.3px;font-size:9.3px;line-height:12px;letter-spacing:-0.245px;color:#ffffff;'>Off</span>
<span class="t" style='left:270.5px;top:4.7px;font-size:10px;line-height:13px;letter-spacing:0.033px;color:#ffffff;'>Initiating application_1 [LL...</span>
<span class="t" style='left:512.0px;top:3.5px;font-size:10px;line-height:13px;letter-spacing:-0.198px;color:#1f3864;'>Search</span>
<span class="t" style='left:928.5px;top:4.0px;font-size:10px;line-height:13px;letter-spacing:-0.089px;color:#ffffff;'>Hilal Kabakoz</span>
<span class="t" style='left:14.0px;top:30.6px;font-size:11px;line-height:14px;letter-spacing:-0.309px;color:#444444;'>File</span>
<span class="t" style='left:57.5px;top:30.6px;font-size:11px;line-height:14px;letter-spacing:-0.660px;color:#2b2b2b;'>LEAP</span>
<span class="t" style='left:106.0px;top:30.6px;font-size:11px;line-height:14px;letter-spacing:0.039px;color:#444444;'>Home</span>
<span class="t" style='left:159.5px;top:30.6px;font-size:11px;line-height:14px;color:#444444;'>Insert</span>
<span class="t" style='left:211.0px;top:30.6px;font-size:11px;line-height:14px;letter-spacing:-0.042px;color:#444444;'>Design</span>
<span class="t" style='left:269.0px;top:30.6px;font-size:11px;line-height:14px;letter-spacing:-0.089px;color:#444444;'>Layout</span>
<span class="t" style='left:325.5px;top:30.6px;font-size:11px;line-height:14px;letter-spacing:-0.227px;color:#444444;'>References</span>
<span class="t" style='left:403.0px;top:30.6px;font-size:11px;line-height:14px;letter-spacing:0.143px;color:#444444;'>Mailings</span>
<span class="t" style='left:468.5px;top:30.6px;font-size:11px;line-height:14px;letter-spacing:-0.346px;color:#444444;'>Review</span>
<span class="t" style='left:525.5px;top:30.6px;font-size:11px;line-height:14px;letter-spacing:-0.164px;color:#444444;'>View</span>
<span class="t" style='left:571.5px;top:30.6px;font-size:11px;line-height:14px;letter-spacing:0.095px;color:#444444;'>Developer</span>
<span class="t" style='left:646.0px;top:30.6px;font-size:11px;line-height:14px;letter-spacing:0.100px;color:#444444;'>Add-ins</span>
<span class="t" style='left:707.5px;top:30.6px;font-size:11px;line-height:14px;letter-spacing:0.094px;color:#444444;'>Help</span>
<span class="t" style='left:753.5px;top:30.6px;font-size:11px;line-height:14px;letter-spacing:-0.008px;color:#2b579a;'>Table Design</span>
<span class="t" style='left:841.0px;top:30.6px;font-size:11px;line-height:14px;letter-spacing:-0.172px;color:#2b579a;'>Layout</span>
<span class="t" style='left:1083.0px;top:30.4px;font-size:10.8px;line-height:14px;letter-spacing:0.037px;color:#2b579a;-webkit-text-stroke:0.35px #2b579a;'>Share</span>
<span class="t" style='left:1147.0px;top:30.4px;font-size:10.8px;line-height:14px;letter-spacing:0.475px;color:#2b579a;-webkit-text-stroke:0.35px #2b579a;'>Comments</span>
<span class="t" style='left:8.5px;top:84.5px;font-size:10px;line-height:13px;letter-spacing:-0.125px;'>Save &amp;</span>
<span class="t" style='left:12.0px;top:98.0px;font-size:10px;line-height:13px;letter-spacing:-0.216px;'>Close</span>
<span class="t" style='left:44.0px;top:84.5px;font-size:10px;line-height:13px;letter-spacing:-0.219px;'>Rename</span>
<span class="t" style='left:45.0px;top:98.0px;font-size:10px;line-height:13px;letter-spacing:0.069px;'>&amp; Close</span>
<span class="t" style='left:90.0px;top:84.5px;font-size:10px;line-height:13px;letter-spacing:-0.574px;'>Save</span>
<span class="t" style='left:123.0px;top:84.5px;font-size:10px;line-height:13px;letter-spacing:-0.216px;'>Close</span>
<span class="t" style='left:155.0px;top:84.5px;font-size:10px;line-height:13px;letter-spacing:0.042px;'>Update</span>
<span class="t" style='left:193.0px;top:84.5px;font-size:10px;line-height:13px;letter-spacing:-0.151px;'>Delete</span>
<span class="t" style='left:240.0px;top:84.5px;font-size:10px;line-height:13px;letter-spacing:0.031px;'>Billable</span>
<span class="t" style='left:295.5px;top:84.5px;font-size:10px;line-height:13px;letter-spacing:0.128px;'>Bring</span>
<span class="t" style='left:289.0px;top:98.0px;font-size:10px;line-height:13px;letter-spacing:0.191px;'>to Front</span>
<span class="t" style='left:757.5px;top:84.5px;font-size:10px;line-height:13px;letter-spacing:0.060px;'>Editing</span>
<span class="t" style='left:810.0px;top:84.5px;font-size:10px;line-height:13px;letter-spacing:0.085px;'>Provide</span>
<span class="t" style='left:806.0px;top:98.0px;font-size:10px;line-height:13px;letter-spacing:-0.178px;'>Feedback</span>
<span class="t" style='left:68.8px;top:118.2px;font-size:9.5px;line-height:12px;letter-spacing:0.246px;'>Document Control</span>
<span class="t" style='left:240.4px;top:118.2px;font-size:9.5px;line-height:12px;letter-spacing:0.063px;'>Activity</span>
<span class="t" style='left:470.3px;top:118.2px;font-size:9.5px;line-height:12px;letter-spacing:0.106px;'>Advanced Functions</span>
<span class="t" style='left:757.3px;top:118.2px;font-size:9.5px;line-height:12px;letter-spacing:0.277px;'>Editing</span>
<span class="t" style='left:806.8px;top:118.2px;font-size:9.5px;line-height:12px;letter-spacing:-0.092px;'>Feedback</span>
<span class="t" style='left:345.5px;top:56.0px;font-size:10px;line-height:13px;letter-spacing:0.071px;'>Apply Document Type</span>
<span class="t" style='left:345.5px;top:75.5px;font-size:10px;line-height:13px;letter-spacing:0.031px;'>Run Fillin</span>
<span class="t" style='left:345.5px;top:94.5px;font-size:10px;line-height:13px;letter-spacing:-0.047px;'>Convert Fields to Text</span>
<span class="t" style='left:451.8px;top:54.3px;font-size:9.4px;line-height:12px;font-weight:700;font-family:"Liberation Serif", serif;color:#33416f;'>En.</span>
<span class="t" style='left:469.0px;top:56.0px;font-size:10px;line-height:13px;letter-spacing:-0.227px;'>Enclosures Text</span>
<span class="t" style='left:469.0px;top:75.5px;font-size:10px;line-height:13px;letter-spacing:0.192px;'>Multiple Print</span>
<span class="t" style='left:469.0px;top:94.5px;font-size:10px;line-height:13px;letter-spacing:-0.458px;'>Save As</span>
<span class="t" style='left:559.5px;top:56.0px;font-size:10px;line-height:13px;letter-spacing:-0.123px;'>Paste with Fields</span>
<span class="t" style='left:559.5px;top:75.5px;font-size:10px;line-height:13px;letter-spacing:-0.222px;'>Save to Matter as PDF</span>
<span class="t" style='left:559.5px;top:94.5px;font-size:10px;line-height:13px;letter-spacing:-0.051px;'>Email As</span>
<span class="t" style='left:680.0px;top:56.0px;font-size:10px;line-height:13px;letter-spacing:-0.219px;'>Rename</span>
<span class="t" style='left:664.6px;top:76.5px;font-size:8.6px;line-height:11px;letter-spacing:-0.111px;font-weight:700;color:#33416f;'>CC</span>
<span class="t" style='left:680.0px;top:75.5px;font-size:10px;line-height:13px;letter-spacing:-0.367px;'>Cc</span>
<span class="t" style='left:680.0px;top:94.5px;font-size:10px;line-height:13px;letter-spacing:-0.186px;'>Insert Clause</span>
<span class="t" style='left:704.3px;top:143.0px;font-size:17.6px;line-height:22px;letter-spacing:-0.343px;color:#4d6da8;'>Insert Clause</span>
<span class="t" style='left:752.0px;top:175.0px;font-size:10px;line-height:13px;letter-spacing:0.174px;color:#1a1a1a;'>Family</span>
<span class="t" style='left:800.0px;top:175.0px;font-size:10px;line-height:13px;letter-spacing:-0.115px;color:#1a1a1a;'>...</span>
<span class="t" style='left:829.0px;top:175.0px;font-size:10px;line-height:13px;letter-spacing:0.080px;color:#1a1a1a;'>Property/Financial Settlement</span>
<span class="t" style='left:980.0px;top:175.0px;font-size:10px;line-height:13px;letter-spacing:0.024px;color:#1a1a1a;'>D. Going to court</span>
<span class="t" style='left:1069.0px;top:175.0px;font-size:10px;line-height:13px;letter-spacing:0.056px;color:#1a1a1a;'>Library of affidavit clauses</span>
<span class="t" style='left:709.6px;top:202.9px;font-size:10.1px;line-height:13px;color:#1a1a1a;transform:scaleX(0.8984);transform-origin:0 50%;'>Name</span>
<span class="t" style='left:81.0px;top:252.0px;font-size:13.45px;line-height:17px;font-weight:700;color:#000;'>2. Final orders sought</span>
<span class="t" style='left:81.0px;top:267.0px;font-size:10.09px;line-height:13px;color:#000;'>(State precisely and briefly the final orders sought by the applicant. Please give a number to each order sought.)</span>
<span class="t" style='left:87.6px;top:301.5px;font-size:14px;line-height:18px;font-family:"Liberation Serif", serif;color:#000;'>1.</span>
<span class="t" style='left:128.0px;top:301.5px;font-size:13.43px;line-height:17px;color:#111;'>I own a motor vehicle registration no.</span>
<span class="t" style='left:392.4px;top:301.5px;font-size:13.33px;line-height:17px;color:#111;'>valued at $</span>
<span class="t" style='left:499.0px;top:301.0px;font-size:13.52px;line-height:18px;color:#111;'>and the respondent</span>
<span class="t" style='left:127.5px;top:324.5px;font-size:13.48px;line-height:18px;color:#111;'>owns a motor vehicle registration no.</span>
<span class="t" style='left:391.6px;top:325.0px;font-size:13.29px;line-height:17px;color:#111;'>valued at $</span>
<span class="t" style='left:495.2px;top:325.0px;font-size:13.3px;line-height:17px;color:#111;'>.</span>
<span class="t" style='left:87.6px;top:350.5px;font-size:14px;line-height:18px;font-family:"Liberation Serif", serif;color:#000;'>2.</span>
<span class="t" style='left:81.0px;top:487.5px;font-size:15.72px;line-height:20px;font-weight:700;color:#000;'>3. Interlocutory orders sought</span>
<span class="t" style='left:81.0px;top:514.0px;font-size:10.08px;line-height:13px;color:#000;'>(These orders can only be sought in this form if you are seeking final orders as well; otherwise, leave blank.  State precisely</span>
<span class="t" style='left:81.0px;top:531.5px;font-size:10.09px;line-height:13px;color:#000;'>and briefly the orders sought. Please give a number to each order sought.)</span>
<span class="t" style='left:84.0px;top:552.5px;font-size:10.07px;line-height:13px;color:#000;'>If you seek interlocutory orders, you must file an affidavit which sets out the facts relied on in support of your application.</span>
<span class="t" style='left:87.6px;top:573.5px;font-size:14px;line-height:18px;font-family:"Liberation Serif", serif;color:#000;'>1.</span>
<span class="t" style='left:731.2px;top:224.8px;font-size:10.1px;line-height:13px;color:#1a1a1a;transform:scaleX(0.9236);transform-origin:0 50%;'>Agreed value of house</span>
<span class="t" style='left:731.2px;top:251.7px;font-size:10.1px;line-height:13px;color:#1a1a1a;transform:scaleX(0.9193);transform-origin:0 50%;'>Assets and or chattels already divided</span>
<span class="t" style='left:731.2px;top:278.6px;font-size:10.1px;line-height:13px;color:#1a1a1a;transform:scaleX(0.9198);transform-origin:0 50%;'>Chattels to be divided equally</span>
<span class="t" style='left:731.2px;top:305.4px;font-size:10.1px;line-height:13px;color:#1a1a1a;transform:scaleX(0.9195);transform-origin:0 50%;'>Children names and dates of birth</span>
<span class="t" style='left:731.2px;top:332.3px;font-size:10.1px;line-height:13px;color:#1a1a1a;transform:scaleX(0.9193);transform-origin:0 50%;'>Entitlement to life insurance policy</span>
<span class="t" style='left:731.2px;top:359.2px;font-size:10.1px;line-height:13px;color:#1a1a1a;transform:scaleX(0.9160);transform-origin:0 50%;'>Entitlement to proceeds of superannuation policy or fund</span>
<span class="t" style='left:731.2px;top:386.1px;font-size:10.1px;line-height:13px;color:#1a1a1a;transform:scaleX(0.9215);transform-origin:0 50%;'>House encumbrance details</span>
<span class="t" style='left:731.2px;top:412.9px;font-size:10.1px;line-height:13px;color:#1a1a1a;transform:scaleX(0.9171);transform-origin:0 50%;'>House to be sold and divided equally</span>
<span class="t" style='left:731.2px;top:439.8px;font-size:10.1px;line-height:13px;color:#1a1a1a;transform:scaleX(0.9192);transform-origin:0 50%;'>House unencumbered</span>
<span class="t" style='left:731.2px;top:466.7px;font-size:10.1px;line-height:13px;color:#1a1a1a;transform:scaleX(0.9260);transform-origin:0 50%;'>Joint asset details</span>
<span class="t" style='left:731.2px;top:493.6px;font-size:10.1px;line-height:13px;color:#1a1a1a;transform:scaleX(0.9157);transform-origin:0 50%;'>Joint proprietors of house</span>
<span class="t" style='left:731.2px;top:520.4px;font-size:10.1px;line-height:13px;color:#1a1a1a;transform:scaleX(0.9200);transform-origin:0 50%;'>Marriage date</span>
<span class="t" style='left:731.2px;top:547.3px;font-size:10.1px;line-height:13px;color:#1a1a1a;transform:scaleX(0.9183);transform-origin:0 50%;'>Marriage date and divorce date</span>
<span class="t" style='left:731.2px;top:574.2px;font-size:10.1px;line-height:13px;color:#1a1a1a;transform:scaleX(0.9171);transform-origin:0 50%;'>Marriage date application for divorce filed</span>
<span class="t" style='left:731.2px;top:601.0px;font-size:10.1px;line-height:13px;color:#1a1a1a;transform:scaleX(0.9266);transform-origin:0 50%;'>Motor vehicles</span>
<span class="t" style='left:731.2px;top:627.9px;font-size:10.1px;line-height:13px;color:#1a1a1a;transform:scaleX(0.9263);transform-origin:0 50%;'>No children</span>
<span class="t" style='left:731.2px;top:654.8px;font-size:10.1px;line-height:13px;color:#1a1a1a;transform:scaleX(0.9215);transform-origin:0 50%;'>Partnership between parties details</span>
</div>
</body></html>
